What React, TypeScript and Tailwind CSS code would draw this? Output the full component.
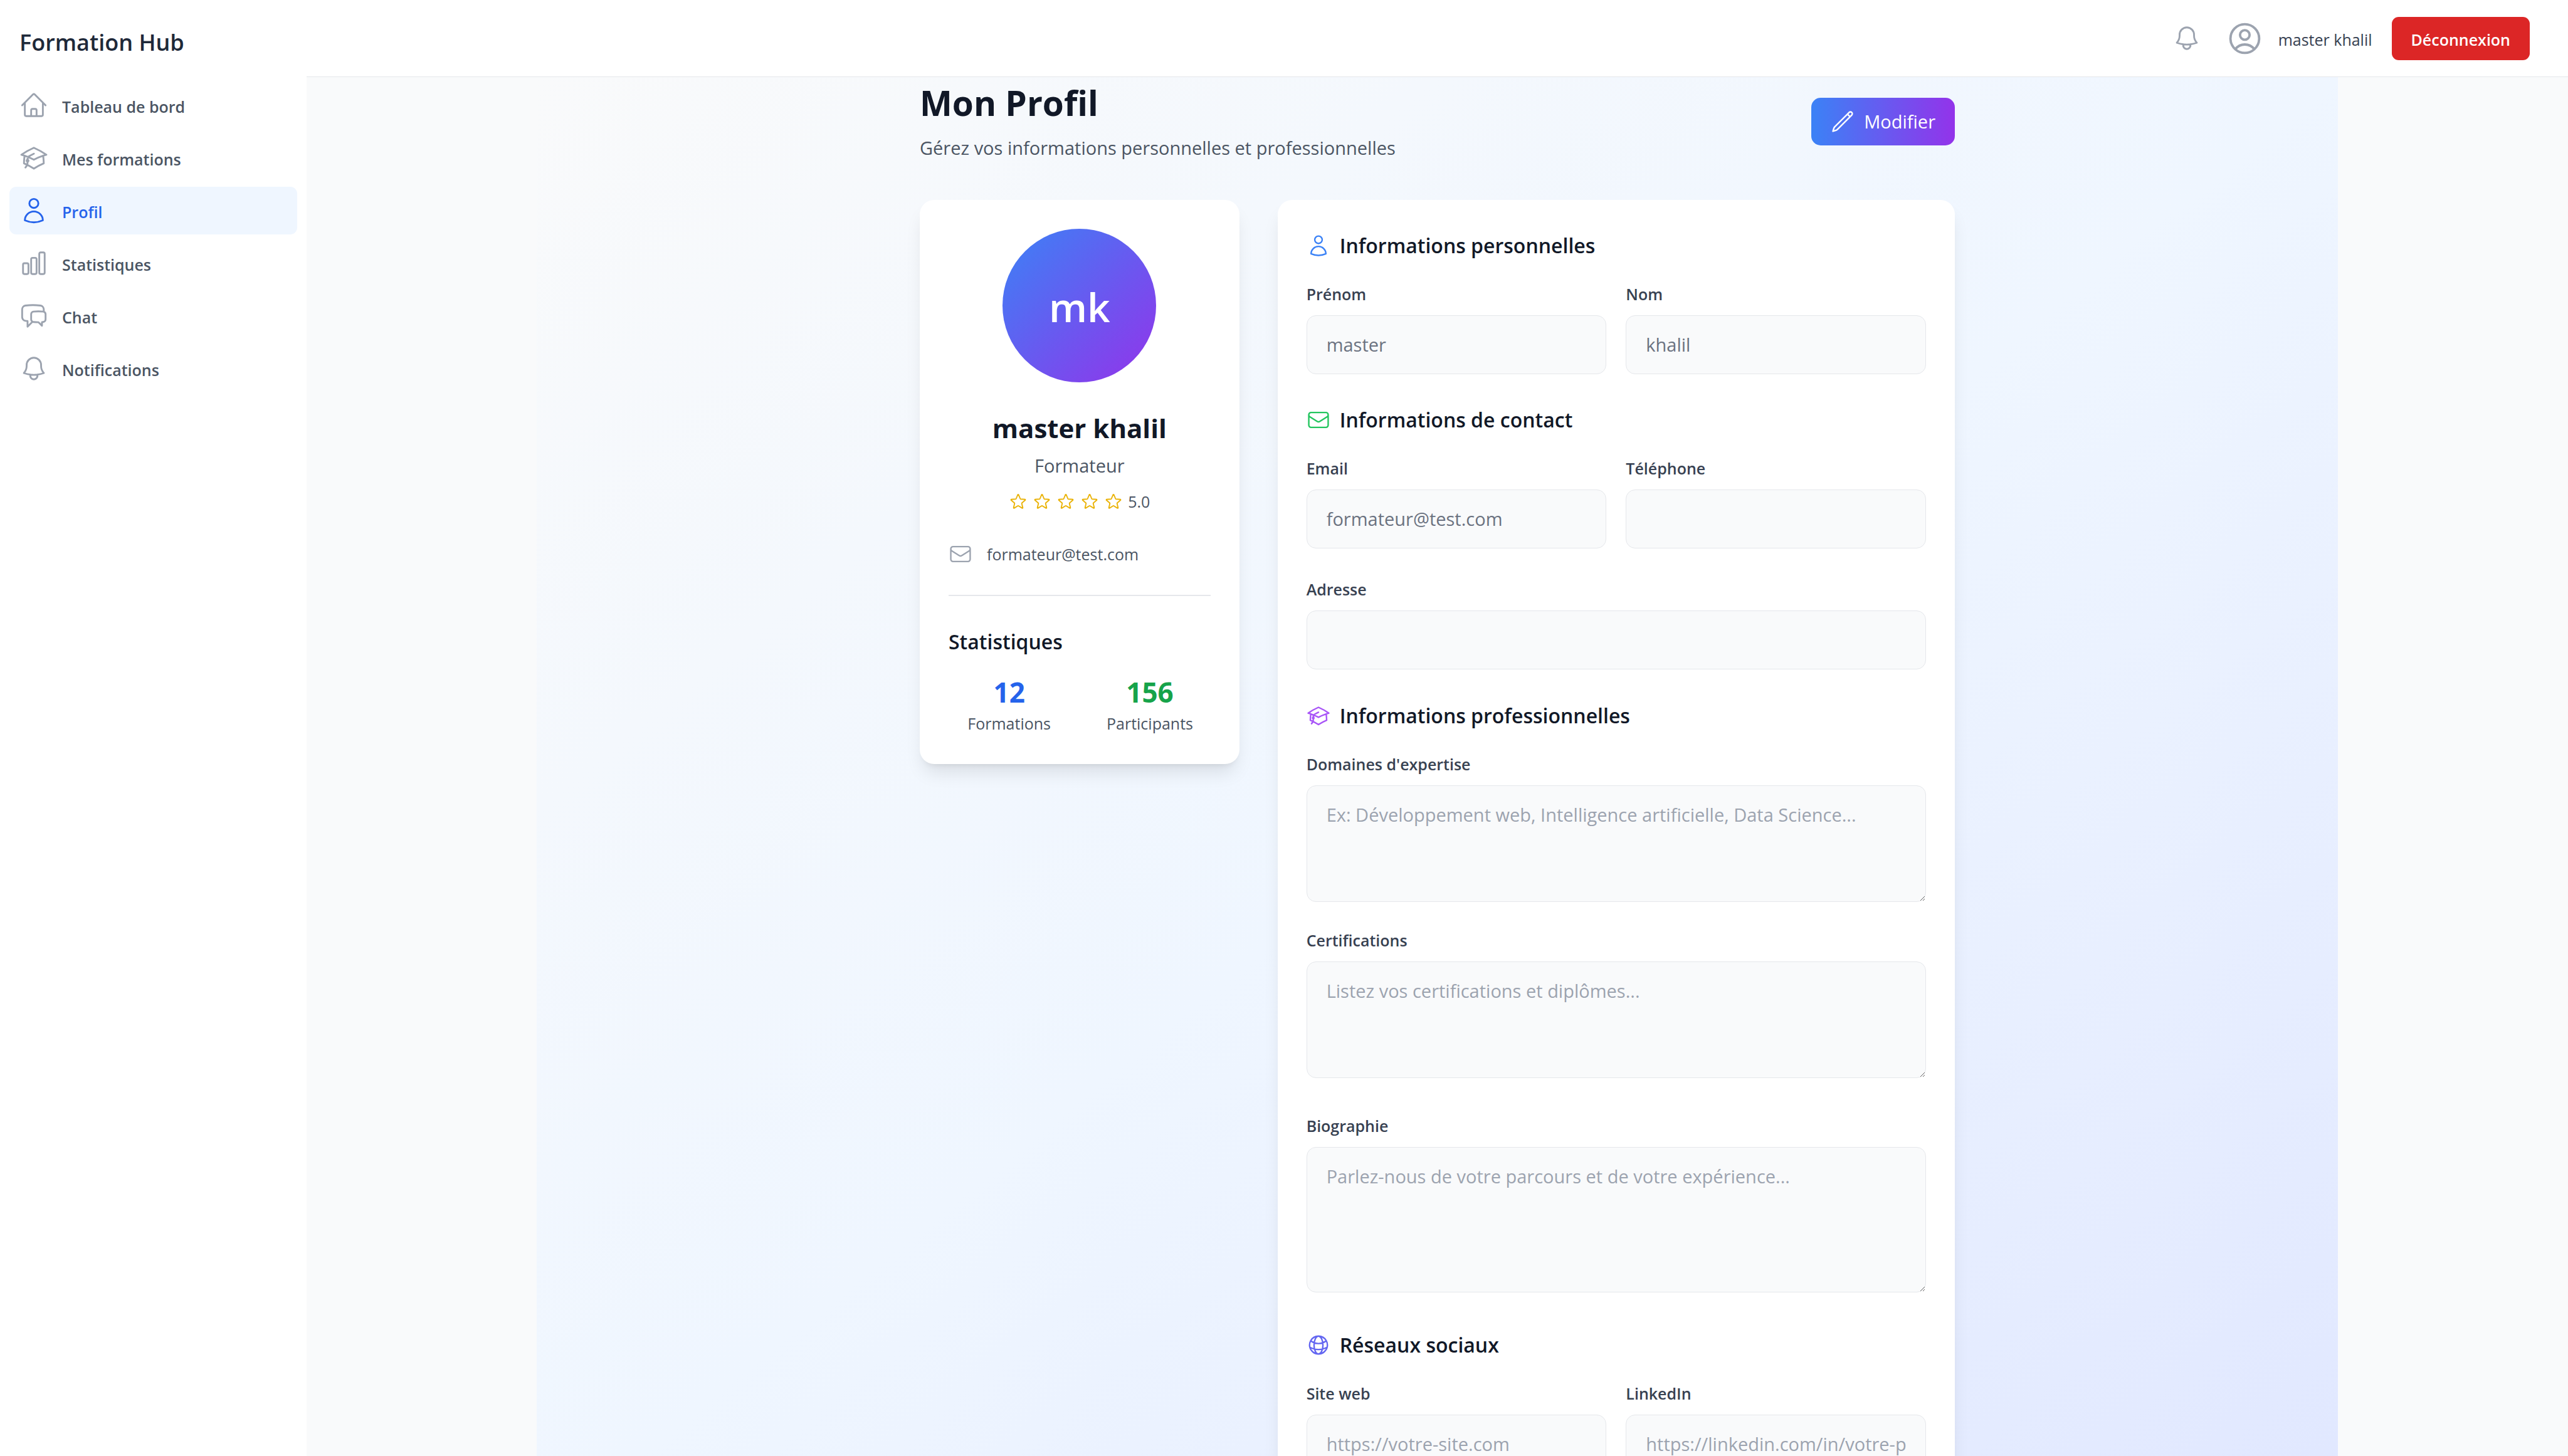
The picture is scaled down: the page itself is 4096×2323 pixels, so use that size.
import type { ComponentType, ReactNode } from "react";
import {
  HiOutlineAcademicCap,
  HiOutlineBell,
  HiOutlineChartBar,
  HiOutlineChatBubbleLeftRight,
  HiOutlineEnvelope,
  HiOutlineGlobeAlt,
  HiOutlineHome,
  HiOutlinePencil,
  HiOutlineStar,
  HiOutlineUser,
  HiOutlineUserCircle,
} from "react-icons/hi2";

type Icon = ComponentType<{ className?: string }>;

const navItems: { label: string; icon: Icon; active?: boolean }[] = [
  { label: "Tableau de bord", icon: HiOutlineHome },
  { label: "Mes formations", icon: HiOutlineAcademicCap },
  { label: "Profil", icon: HiOutlineUser, active: true },
  { label: "Statistiques", icon: HiOutlineChartBar },
  { label: "Chat", icon: HiOutlineChatBubbleLeftRight },
  { label: "Notifications", icon: HiOutlineBell },
];

function Sidebar() {
  return (
    <aside className="flex w-[489px] shrink-0 flex-col bg-white px-[15px]">
      <div className="flex h-[130px] items-center px-[16px] pt-[4px]">
        <h1 className="text-[36px] leading-[53px] font-semibold text-gray-800">Formation Hub</h1>
      </div>
      <nav className="flex flex-col gap-[8px]" aria-label="Navigation principale">
        {navItems.map(({ label, icon: NavIcon, active }) => (
          <a
            key={label}
            href="#"
            aria-current={active ? "page" : undefined}
            className={
              active
                ? "flex h-[76px] items-center gap-[22px] rounded-[11px] bg-[#eff6ff] px-[16px] text-[25px] leading-[38px] font-semibold text-[#2563eb]"
                : "flex h-[76px] items-center gap-[22px] rounded-[11px] px-[16px] text-[25px] leading-[38px] font-semibold text-[#4b5563]"
            }
          >
            <NavIcon className={active ? "size-[46px] text-[#2563eb]" : "size-[46px] text-[#9ca3af]"} />
            <span className="pt-[4px]">{label}</span>
          </a>
        ))}
      </nav>
    </aside>
  );
}

function Header() {
  return (
    <header className="flex h-[123px] shrink-0 items-center justify-end gap-[31px] border-b border-[#e5e7eb] bg-white pr-[61px]">
      <button type="button" aria-label="Notifications" className="p-[8px] text-[#9ca3af]">
        <HiOutlineBell className="size-[46px]" />
      </button>
      <div className="flex items-center gap-[23px]">
        <HiOutlineUserCircle className="size-[61px] text-[#9ca3af]" />
        <span className="pt-[4px] text-[25px] leading-[38px] text-[#374151]">master khalil</span>
      </div>
      <button
        type="button"
        className="h-[69px] rounded-[11px] bg-[#dc2626] px-[31px] pt-[4px] text-[25px] leading-[38px] font-semibold text-white"
      >
        Déconnexion
      </button>
    </header>
  );
}

function ProfileCard() {
  return (
    <section className="rounded-[23px] bg-white p-[46px] shadow-[0_19px_29px_-6px_rgba(0,0,0,0.1),0_8px_11px_-8px_rgba(0,0,0,0.1)]">
      <div className="flex flex-col items-center">
        <div className="flex size-[245px] items-center justify-center rounded-full bg-linear-to-br/srgb from-[#3b82f6] to-[#9333ea] pt-[4px] text-[64px] font-semibold text-white">
          mk
        </div>
        <h2 className="mt-[42px] text-[42px] leading-[61px] font-bold text-[#111827]">master khalil</h2>
        <p className="mt-[7px] text-[29px] leading-[46px] text-[#4b5563]">Formateur</p>
        <div className="mt-[15px] flex h-[38px] items-center gap-[8px]">
          {[1, 2, 3, 4, 5].map((n) => (
            <HiOutlineStar key={n} className="size-[30px] text-[#eab308]" />
          ))}
          <span className="text-[25px] leading-[38px] text-[#4b5563]">5.0</span>
        </div>
      </div>
      <div className="mt-[46px] flex items-center gap-[23px] text-[25px] leading-[38px] text-[#4b5563]">
        <HiOutlineEnvelope className="size-[38px] text-[#9ca3af]" />
        formateur@test.com
      </div>
      <div className="mt-[46px] border-t-2 border-[#e5e7eb] pt-[46px]">
        <h3 className="text-[32px] leading-[54px] font-semibold text-[#111827]">Statistiques</h3>
        <div className="mt-[23px] grid grid-cols-2 gap-[31px] text-center">
          <div>
            <div className="text-[44px] leading-[61px] font-bold text-[#2563eb]">12</div>
            <div className="text-[25px] leading-[38px] text-[#4b5563]">Formations</div>
          </div>
          <div>
            <div className="text-[44px] leading-[61px] font-bold text-[#16a34a]">156</div>
            <div className="text-[25px] leading-[38px] text-[#4b5563]">Participants</div>
          </div>
        </div>
      </div>
    </section>
  );
}

function SectionTitle({ icon: TitleIcon, tint, children }: { icon: Icon; tint: string; children: ReactNode }) {
  return (
    <h3 className="mb-[31px] flex items-center gap-[15px] text-[32px] leading-[54px] font-semibold text-[#111827]">
      <span className={tint}>
        <TitleIcon className="size-[38px]" />
      </span>
      {children}
    </h3>
  );
}

const labelClass = "mb-[15px] block text-[25px] leading-[38px] font-semibold text-[#374151]";
const controlClass =
  "block w-full rounded-[15px] border border-[#e5e7eb] bg-[#f9fafb] px-[31px] py-[23px] text-[29px] leading-[46px] text-[#6b7280] placeholder:text-[#9ca3af]";

function Field({
  id,
  label,
  type = "text",
  value = "",
  placeholder,
}: {
  id: string;
  label: string;
  type?: string;
  value?: string;
  placeholder?: string;
}) {
  return (
    <div>
      <label htmlFor={id} className={labelClass}>
        {label}
      </label>
      <input id={id} type={type} defaultValue={value} placeholder={placeholder} disabled className={controlClass} />
    </div>
  );
}

function Area({ id, label, rows, placeholder }: { id: string; label: string; rows: number; placeholder: string }) {
  return (
    <div>
      <label htmlFor={id} className={labelClass}>
        {label}
      </label>
      <textarea id={id} rows={rows} placeholder={placeholder} disabled className={controlClass} />
    </div>
  );
}

function ProfileForm() {
  return (
    <form className="col-span-2 rounded-[23px] bg-white p-[46px] shadow-[0_19px_29px_-6px_rgba(0,0,0,0.1),0_8px_11px_-8px_rgba(0,0,0,0.1)]">
      <SectionTitle icon={HiOutlineUser} tint="text-[#3b82f6]">
        Informations personnelles
      </SectionTitle>
      <div className="grid grid-cols-2 gap-[31px]">
        <Field id="prenom" label="Prénom" value="master" />
        <Field id="nom" label="Nom" value="khalil" />
      </div>

      <div className="mt-[46px]">
        <SectionTitle icon={HiOutlineEnvelope} tint="text-[#22c55e]">
          Informations de contact
        </SectionTitle>
        <div className="grid grid-cols-2 gap-[31px]">
          <Field id="email" label="Email" type="email" value="formateur@test.com" />
          <Field id="telephone" label="Téléphone" type="tel" />
        </div>
        <div className="mt-[46px]">
          <Field id="adresse" label="Adresse" />
        </div>
      </div>

      <div className="mt-[47px]">
        <SectionTitle icon={HiOutlineAcademicCap} tint="text-[#a855f7]">
          Informations professionnelles
        </SectionTitle>
        <div className="flex flex-col gap-[42px]">
          <Area
            id="expertise"
            label="Domaines d'expertise"
            rows={3}
            placeholder="Ex: Développement web, Intelligence artificielle, Data Science..."
          />
          <Area
            id="certifications"
            label="Certifications"
            rows={3}
            placeholder="Listez vos certifications et diplômes..."
          />
        </div>
        <div className="mt-[57px]">
          <Area
            id="biographie"
            label="Biographie"
            rows={4}
            placeholder="Parlez-nous de votre parcours et de votre expérience..."
          />
        </div>
      </div>

      <div className="mt-[57px]">
        <SectionTitle icon={HiOutlineGlobeAlt} tint="text-[#6366f1]">
          Réseaux sociaux
        </SectionTitle>
        <div className="grid grid-cols-2 gap-[31px]">
          <Field id="site" label="Site web" type="url" placeholder="https://votre-site.com" />
          <Field id="linkedin" label="LinkedIn" type="url" placeholder="https://linkedin.com/in/votre-profil" />
        </div>
      </div>
    </form>
  );
}

export default function App() {
  return (
    <div className="flex h-screen overflow-hidden bg-[#f9fafb] font-['Open_Sans','Noto_Sans',sans-serif]">
      <Sidebar />
      <div className="flex min-w-0 flex-1 flex-col">
        <Header />
        <main className="min-h-0 flex-1 overflow-y-auto [scrollbar-width:none]">
          <div className="mx-auto max-w-[2873px] bg-linear-to-br/srgb from-[#f9fafb] via-[#eff6ff] to-[#e0e7ff] pt-[6px] pb-[61px]">
            <div className="mx-auto max-w-[1651px]">
              <div className="mb-[60px] flex items-center justify-between">
                <div>
                  <h1 className="text-[55px] leading-[69px] font-bold text-[#111827]">Mon Profil</h1>
                  <p className="mt-[15px] text-[29px] leading-[46px] text-[#4b5563]">
                    Gérez vos informations personnelles et professionnelles
                  </p>
                </div>
                <button
                  type="button"
                  className="flex items-center gap-[15px] rounded-[15px] bg-linear-to-r/srgb from-[#3b82f6] to-[#9333ea] px-[31px] py-[15px] text-[29px] leading-[46px] text-white"
                >
                  <HiOutlinePencil className="size-[38px]" />
                  Modifier
                </button>
              </div>
              <div className="grid grid-cols-3 items-start gap-[61px]">
                <ProfileCard />
                <ProfileForm />
              </div>
            </div>
          </div>
        </main>
      </div>
    </div>
  );
}
